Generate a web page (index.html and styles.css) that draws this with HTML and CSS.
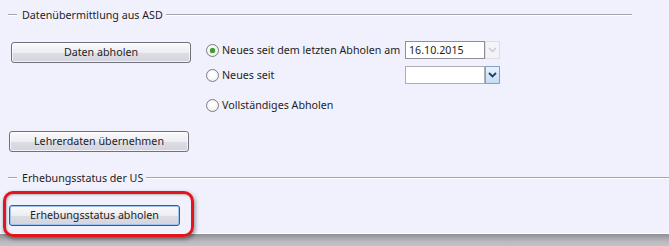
FILE: index.html
```html
<!DOCTYPE html>
<html lang="de">
<head>
<meta charset="utf-8">
<link rel="stylesheet" href="styles.css">
</head>
<body>
<div class="screen">
  <div class="panel">
    <div class="group-head head-asd">
      <span class="dash"></span>
      <span class="title">Datenübermittlung aus ASD</span>
      <span class="line"></span>
    </div>
    <div class="main-row">
      <button class="btn btn-daten">Daten abholen</button>
      <div class="options">
        <div class="opt">
          <span class="radio checked"></span>
          <span class="label">Neues seit dem letzten Abholen am</span>
          <div class="combo disabled"><span class="value">16.10.2015</span><span class="drop"><svg width="9" height="6" viewBox="0 0 9 6"><path d="M1 1 L4.5 4.5 L8 1" fill="none" stroke="#c8c8cc" stroke-width="1.4"/></svg></span></div>
        </div>
        <div class="opt">
          <span class="radio"></span>
          <span class="label">Neues seit</span>
          <div class="combo active"><span class="value"></span><span class="drop"><svg width="9" height="6" viewBox="0 0 9 6"><path d="M1 1 L4.5 4.5 L8 1" fill="none" stroke="#1c3f7a" stroke-width="1.8"/></svg></span></div>
        </div>
        <div class="opt opt-last">
          <span class="radio"></span>
          <span class="label">Vollständiges Abholen</span>
        </div>
      </div>
    </div>
    <button class="btn btn-lehrer">Lehrerdaten übernehmen</button>
    <div class="group-head head-us">
      <span class="dash"></span>
      <span class="title">Erhebungsstatus der US</span>
      <span class="line"></span>
    </div>
    <button class="btn btn-erheb">Erhebungsstatus abholen</button>
  </div>
  <div class="shadow"></div>
  <div class="highlight"></div>
</div>
</body>
</html>
```
FILE: styles.css
```css
* { box-sizing: border-box; }
html, body { margin: 0; padding: 0; }
body {
  width: 669px;
  height: 246px;
  overflow: hidden;
  font-family: "Noto Sans", "DejaVu Sans", sans-serif;
  font-size: 10.7px;
  color: #1e1e1e;
  background: #b4b4b8;
}
.screen { position: relative; width: 669px; height: 246px; }
.panel {
  height: 234px;
  background: #f1f1fd;
  border-bottom: 1px solid #ffffff;
  padding-top: 8px;
  display: flex;
  flex-direction: column;
  align-items: flex-start;
}
.shadow {
  height: 12px;
  background: linear-gradient(#8f8f93, #b9b9bd 60%, #c4c4c8);
}
.group-head {
  display: flex;
  align-items: center;
  height: 14px;
  width: 100%;
}
.group-head .dash, .group-head .line {
  height: 2px;
  border-top: 1px solid #a6a6ae;
  border-bottom: 1px solid #ffffff;
}
.group-head .dash { width: 9px; margin-left: 8px; }
.group-head .title { padding: 0 3px 0 5px; white-space: nowrap; line-height: 14px; }
.group-head .line { flex: 1; }
.head-asd .line { margin-right: 37px; }
.head-us { margin-top: 19px; }

.btn {
  font-family: inherit;
  font-size: 10.7px;
  color: #1e1e1e;
  height: 21px;
  padding: 0;
  border: 1px solid #707078;
  border-radius: 3px;
  background: linear-gradient(#fbfbfd, #ececf2 50%, #dcdde5 51%, #d3d4de);
  box-shadow: inset 0 0 0 1px rgba(255,255,255,0.7);
  line-height: 19px;
  text-align: center;
}
.main-row {
  display: flex;
  align-items: flex-start;
  margin-top: 20px;
}
.btn-daten { width: 180px; margin-left: 11px; }
.options {
  margin-left: 15px;
  margin-top: -1px;
  display: flex;
  flex-direction: column;
  gap: 7px;
}
.opt {
  display: flex;
  align-items: center;
  height: 18px;
}
.opt-last { margin-top: 5px; }
.radio {
  width: 13px;
  height: 13px;
  border-radius: 50%;
  border: 1px solid #7d7e80;
  background: radial-gradient(circle at 50% 45%, #ffffff 30%, #e4e4e8 100%);
  display: flex;
  align-items: center;
  justify-content: center;
  flex: none;
}
.radio.checked::after {
  content: "";
  width: 5px;
  height: 5px;
  border-radius: 50%;
  background: #3aa02a;
  box-shadow: 0 0 1px #2c7d1e;
}
.label { margin-left: 3px; white-space: nowrap; width: 183px; }
.combo {
  display: flex;
  height: 18px;
  width: 95px;
}
.combo .value {
  width: 80px;
  height: 18px;
  border: 1px solid #abadb3;
  background: #ffffff;
  padding-left: 3px;
  line-height: 16px;
}
.combo .drop {
  width: 15px;
  height: 18px;
  display: flex;
  align-items: center;
  justify-content: center;
  border: 1px solid #d8d8de;
  border-left: none;
}
.combo.disabled .value { border-color: #8e8f95; }
.combo.disabled .drop { background: #f4f4f8; border: 1px solid #dcdce2; }
.combo.active .drop {
  background: linear-gradient(#e8f2fb, #c4dcf3);
  border: 1px solid #7ea3cf;
}
.btn-lehrer { width: 180px; margin-left: 9px; margin-top: 17px; }
.btn-erheb {
  width: 171px;
  margin-left: 9px;
  margin-top: 20px;
  border-color: #3c5a7e;
  box-shadow: inset 0 0 0 1px #9fc5ec;
}
.highlight {
  position: absolute;
  left: 3px;
  top: 191px;
  width: 191px;
  height: 46px;
  border: 3px solid #e3141b;
  border-radius: 10px;
  box-shadow: 1px 2px 4px rgba(0,0,0,0.45), inset 1px 1px 2px rgba(0,0,0,0.25);
}
```
